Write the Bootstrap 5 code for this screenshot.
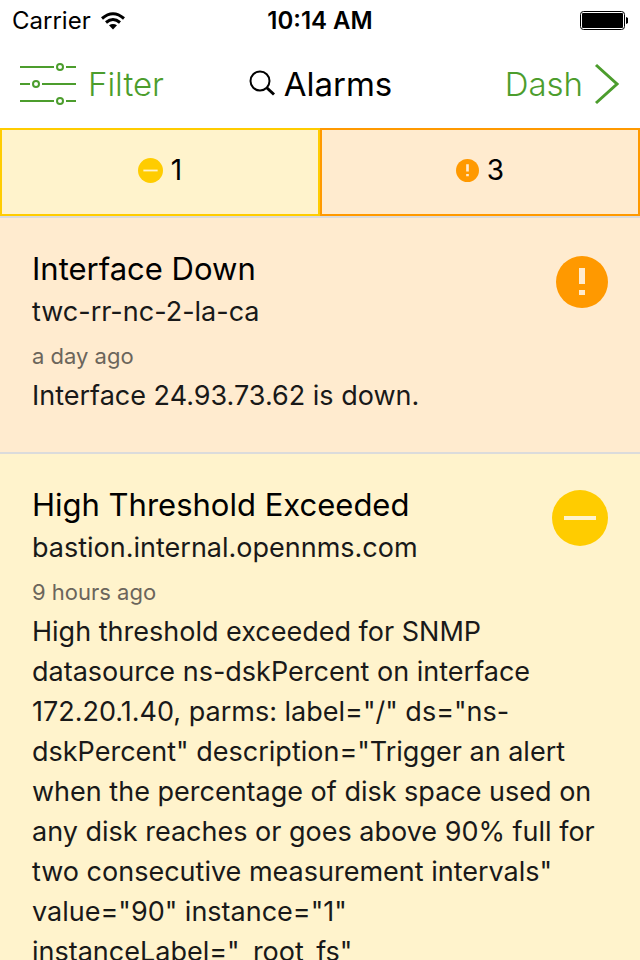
<!DOCTYPE html>
<html lang="en">
<head>
<meta charset="utf-8">
<meta name="viewport" content="width=device-width, initial-scale=1">
<title>Alarms</title>
<link href="https://cdn.jsdelivr.net/npm/bootstrap@5.3.0/dist/css/bootstrap.min.css" rel="stylesheet">
<style>
  body { font-family: Inter, "Liberation Sans", sans-serif; color: #000; background: #fff; }
  svg { display: block; flex: none; }
  .status-bar { height: 40px; padding: 2px 12px 0; font-size: 24px; line-height: 38px; }
  .side { flex: 1 1 0; }
  .top-nav { height: 88px; padding: 0 20px; }
  .nav-action { color: #4c9d2d; font-weight: 300; padding: 0; border: 0; font-size: 33px; line-height: 40px; }
  .nav-action:hover { color: #3b7a23; }
  .screen-title { font-size: 33px; font-weight: 400; line-height: 40px; }
  .severity { height: 88px; border: 2px solid; border-radius: 0; font-size: 28px; line-height: 40px; color: #000; padding: 0 0 4px; }
  .minor { background: #fff3cc; --sev: #ffcc00; --sev-bg: #fff3cc; }
  .major { background: #ffebcf; --sev: #ff9900; --sev-bg: #ffebcf; }
  .severity.minor, .severity.minor:hover { border-color: #ffcc00; background: #fff3cc; }
  .severity.major, .severity.major:hover { border-color: #ff9900; background: #ffebcf; }
  .disc { fill: var(--sev); }
  .glyph { fill: var(--sev-bg); }
  .alarm-list { min-height: 0; scrollbar-width: none; }
  .alarm-list::-webkit-scrollbar { display: none; }
  .alarm { border-top: 2px solid #dbdbdb; padding: 32px 32px 36px; }
  .alarm h2 { font-size: 31px; font-weight: 400; line-height: 38px; }
  .alarm-node { font-size: 27px; line-height: 48px; color: #191919; }
  .alarm-time { font-size: 22px; line-height: 40px; color: #6b655b; }
  .alarm-text { font-size: 27px; line-height: 40px; color: #191919; }
  .alarm-icon { height: 56px; margin-top: 4px; }
</style>
</head>
<body>
<div class="vh-100 d-flex flex-column overflow-hidden">
  <div class="status-bar flex-shrink-0 d-flex align-items-center">
    <div class="side d-flex align-items-center gap-2">
      <span>Carrier</span>
      <svg width="28" height="20" viewBox="0 0 28 20" aria-label="Wi-Fi">
        <g fill="none" stroke="#000" stroke-width="3">
          <path d="M3 7.500Q14-2 25 7.500"/>
          <path d="M7 11.500Q14 5.500 21 11.500"/>
        </g>
        <path d="M10 14.300Q14 11.500 18 14.300L14 18.500Z"/>
      </svg>
    </div>
    <div class="fw-semibold">10:14 AM</div>
    <div class="side d-flex justify-content-end">
      <svg width="48" height="20" viewBox="0 0 48 20" aria-label="Battery full">
        <rect x="0.500" y="0.500" width="44" height="18" rx="3" fill="none" stroke="#000"/>
        <rect x="2" y="2" width="41" height="15" rx="1"/>
        <path d="M46 6Q49 7 49 9.500T46 13Z"/>
      </svg>
    </div>
  </div>

  <nav class="top-nav flex-shrink-0 d-flex align-items-center" aria-label="Main">
    <div class="side d-flex">
      <button type="button" class="btn nav-action d-flex align-items-center">
        <svg class="me-2" width="60" height="44" viewBox="0 0 60 44" fill="none" stroke="#4c9d2d" stroke-width="2" aria-hidden="true">
          <path d="M0 5H34M46 5H56M0 22H10M22 22H56M0 39H34M46 39H56"/>
          <circle cx="40" cy="5" r="3"/><circle cx="16" cy="22" r="3"/><circle cx="40" cy="39" r="3"/>
        </svg>Filter
      </button>
    </div>
    <div class="d-flex align-items-center gap-2">
      <svg width="28" height="28" viewBox="0 0 28 28" fill="none" stroke="#000" aria-hidden="true">
        <circle cx="12" cy="11" r="9.500" stroke-width="2"/>
        <path d="M18.500 17.500L26 24.500" stroke-width="3"/>
      </svg>
      <h1 class="screen-title mb-0">Alarms</h1>
    </div>
    <div class="side d-flex justify-content-end">
      <a href="#dash" class="nav-action d-flex align-items-center gap-2 text-decoration-none">Dash
        <svg width="29" height="44" viewBox="0 0 29 44" fill="none" stroke="#4c9d2d" stroke-width="3" aria-hidden="true">
          <path d="M5 3L26 22L5 41"/>
        </svg>
      </a>
    </div>
  </nav>

  <div class="row g-0 flex-shrink-0">
    <div class="col-6">
      <button type="button" class="severity minor btn w-100 d-flex align-items-center justify-content-center gap-2" aria-label="Minor alarms: 1">
        <svg width="25" height="25" viewBox="0 0 56 56" aria-hidden="true"><circle class="disc" cx="28" cy="28" r="28"/><rect class="glyph" x="12" y="26" width="32" height="4"/></svg>1
      </button>
    </div>
    <div class="col-6">
      <button type="button" class="severity major btn w-100 d-flex align-items-center justify-content-center gap-2" aria-label="Major alarms: 3">
        <svg width="23" height="23" viewBox="0 0 52 52" aria-hidden="true"><circle class="disc" cx="26" cy="26" r="26"/><path class="glyph" d="M23 12H29V28H23ZM23 34H29V39H23Z"/></svg>3
      </button>
    </div>
  </div>

  <main class="alarm-list flex-fill overflow-auto">
    <article class="alarm major">
      <div class="d-flex justify-content-between">
        <div>
          <h2 class="mb-0">Interface Down</h2>
          <div class="alarm-node">twc-rr-nc-2-la-ca</div>
        </div>
        <div class="alarm-icon d-flex align-items-center">
          <svg width="52" height="52" viewBox="0 0 52 52" aria-label="Major"><circle class="disc" cx="26" cy="26" r="26"/><path class="glyph" d="M23 12H29V28H23ZM23 34H29V39H23Z"/></svg>
        </div>
      </div>
      <div class="alarm-time">a day ago</div>
      <p class="alarm-text mb-0">Interface 24.93.73.62 is down.</p>
    </article>
    <article class="alarm minor">
      <div class="d-flex justify-content-between">
        <div>
          <h2 class="mb-0">High Threshold Exceeded</h2>
          <div class="alarm-node">bastion.internal.opennms.com</div>
        </div>
        <div class="alarm-icon d-flex align-items-center">
          <svg width="56" height="56" viewBox="0 0 56 56" aria-label="Minor"><circle class="disc" cx="28" cy="28" r="28"/><rect class="glyph" x="12" y="26" width="32" height="4"/></svg>
        </div>
      </div>
      <div class="alarm-time">9 hours ago</div>
      <p class="alarm-text mb-0">High threshold exceeded for SNMP datasource ns-dskPercent on interface 172.20.1.40, parms: label="/" ds="ns-dskPercent" description="Trigger an alert when the percentage of disk space used on any disk reaches or goes above 90% full for two consecutive measurement intervals" value="90" instance="1" instanceLabel="_root_fs"</p>
    </article>
  </main>
</div>
<script src="https://cdn.jsdelivr.net/npm/bootstrap@5.3.0/dist/js/bootstrap.bundle.min.js"></script>
</body>
</html>
